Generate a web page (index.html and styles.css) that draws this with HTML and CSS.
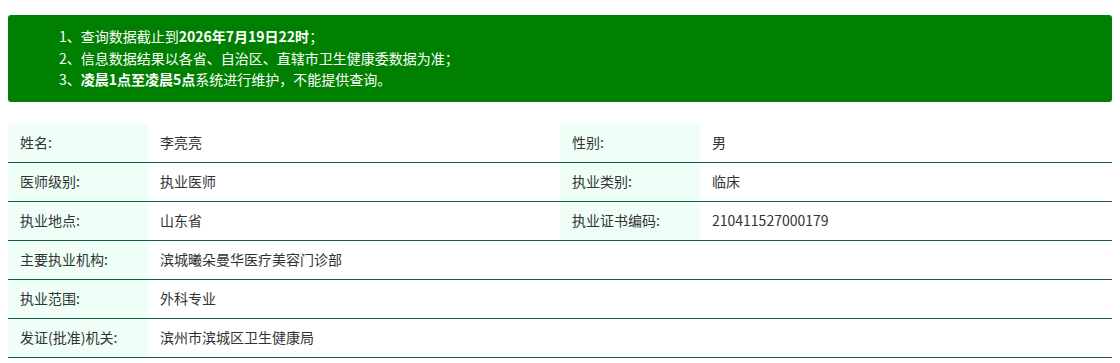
FILE: index.html
```html
<!DOCTYPE html>
<html lang="zh-CN">
<head>
<meta charset="utf-8">
<title>医师信息查询</title>
<link rel="stylesheet" href="styles.css">
</head>
<body>
<div class="page">
  <div class="notice">
    <ul class="notice-list">
      <li>1、查询数据截止到<b>2026年7月19日22时</b>；</li>
      <li>2、信息数据结果以各省、自治区、直辖市卫生健康委数据为准；</li>
      <li>3、<b>凌晨1点至凌晨5点</b>系统进行维护，不能提供查询。</li>
    </ul>
  </div>
  <table class="info">
    <colgroup>
      <col class="c-label"><col class="c-value"><col class="c-label"><col class="c-value">
    </colgroup>
    <tbody>
      <tr><th>姓名:</th><td>李亮亮</td><th>性别:</th><td>男</td></tr>
      <tr><th>医师级别:</th><td>执业医师</td><th>执业类别:</th><td>临床</td></tr>
      <tr><th>执业地点:</th><td>山东省</td><th>执业证书编码:</th><td>210411527000179</td></tr>
      <tr><th>主要执业机构:</th><td colspan="3">滨城曦朵曼华医疗美容门诊部</td></tr>
      <tr><th>执业范围:</th><td colspan="3">外科专业</td></tr>
      <tr><th>发证(批准)机关:</th><td colspan="3">滨州市滨城区卫生健康局</td></tr>
    </tbody>
  </table>
</div>
</body>
</html>
```
FILE: styles.css
```css
* { box-sizing: border-box; }
html, body { margin: 0; padding: 0; background: #fff; }
body {
  font-family: "Noto Sans CJK SC", "Noto Sans", sans-serif;
  color: #333;
}
.page {
  padding: 15px 8px 0 8px;
}
.notice {
  background: #008000;
  border-radius: 3px;
  color: #fff;
  padding: 11px 0 11px 51px;
  height: 87px;
}
.notice-list {
  list-style: none;
  margin: 0;
  padding: 0;
  font-size: 14px;
  line-height: 21.5px;
}
.notice-list b { font-weight: 700; }
.info {
  margin-top: 21px;
  width: 100%;
  border-collapse: collapse;
  table-layout: fixed;
  font-size: 14px;
}
.c-label { width: 140px; }
.info th, .info td {
  height: 39px;
  padding: 0 0 1px 12px;
  text-align: left;
  font-weight: 400;
  border-bottom: 1px solid #0e6338;
  color: #333;
}
.info th { background: #effff7; }
.info td { background: #fff; }
```
